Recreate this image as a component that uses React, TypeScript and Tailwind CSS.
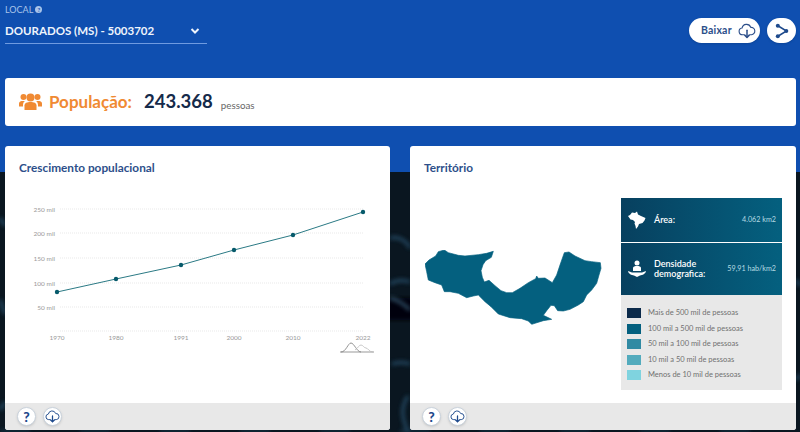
import React from "react";

const rows = [
  ["#0b2a4a", "Mais de 500 mil de pessoas"],
  ["#04607f", "100 mil a 500 mil de pessoas"],
  ["#318aa3", "50 mil a 100 mil de pessoas"],
  ["#53abbd", "10 mil a 50 mil de pessoas"],
  ["#7fd3df", "Menos de 10 mil de pessoas"],
];

const Cloud = ({ size = 18, color = "#1e4a8c" }: { size?: number; color?: string }) => (
  <svg width={size} height={size} viewBox="0 0 24 24" fill="none" stroke={color} strokeWidth="1.5" strokeLinecap="round" strokeLinejoin="round">
    <path d="M8 17H6a4.5 4.5 0 0 1-.6-8.96A6 6 0 0 1 17 7.2 4.9 4.9 0 0 1 18 17h-2" />
    <path d="M12 11v9" strokeWidth="2" />
    <path d="M9 17.5l3 3 3-3" strokeWidth="2" />
  </svg>
);

const Footer = () => (
  <div className="h-[27px] bg-[#e8e8e8] flex items-center gap-[7px] pl-[12px]">
    <div className="w-[19px] h-[19px] rounded-full bg-white border border-[#c9d2dc] flex items-center justify-center text-[14px] font-black text-[#1e4a8c] shadow-sm">?</div>
    <div className="w-[19px] h-[19px] rounded-full bg-white border border-[#c9d2dc] flex items-center justify-center shadow-sm"><Cloud size={15} /></div>
  </div>
);

const xs = [57, 116, 181, 234, 293, 363];
const ysVal = [292, 279, 265, 250, 235, 212];
const years = ["1970", "1980", "1991", "2000", "2010", "2022"];
const ticks: [string, number][] = [["250 mil", 209], ["200 mil", 233], ["150 mil", 258], ["100 mil", 283], ["50 mil", 307]];

const outline: [number, number][] = [[30,72],[42,60],[62,48],[70,35],[88,30],[100,38],[130,46],[150,48],[190,44],[215,40],[235,34],[229,52],[212,62],[204,74],[198,92],[202,112],[208,126],[222,121],[240,137],[258,152],[275,158],[292,158],[315,145],[340,128],[362,116],[365,108],[370,115],[390,114],[412,128],[425,105],[435,75],[448,38],[462,36],[480,48],[510,62],[530,65],[556,68],[558,85],[552,105],[545,130],[530,150],[515,165],[505,185],[490,195],[465,208],[445,213],[428,212],[418,197],[408,196],[395,212],[385,226],[410,238],[385,242],[350,253],[340,243],[320,236],[285,233],[250,222],[228,200],[210,185],[190,165],[175,168],[155,173],[130,160],[105,155],[88,155],[80,135],[60,128],[40,120],[35,95]];

const mapPath = "M" + outline.map(([x, y]) => `${x} ${y}`).join("L") + "Z";

export default function App() {
  return (
    <div className="relative w-[800px] h-[432px] overflow-hidden bg-[#0a141d] font-['Lato','Inter',sans-serif]">
      <svg width="800" height="260" viewBox="0 172 800 260" className="absolute left-0 top-[172px]" fill="none">
        <defs>
          <filter id="b"><feGaussianBlur stdDeviation="2" /></filter>
        </defs>
        <rect x="0" y="172" width="800" height="260" fill="#0a1620" />
        <rect x="385" y="298" width="30" height="22" fill="#02060a" filter="url(#b)" />
        <g filter="url(#b)" stroke="#2a5674" strokeWidth="3" opacity="0.85">
          <path d="M390 238c8-2 16 2 20 10" />
          <path d="M390 284c6-4 14-4 20-2" />
          <path d="M390 298c8 2 14 6 20 12" stroke="#3a6078" />
          <path d="M392 364c6-2 12-2 18 0" />
          <path d="M408 432c-6-14-8-24 0-36" />
          <path d="M0 218c2 4 4 6 5 8" />
          <path d="M0 300c2 4 3 10 5 14" />
          <path d="M0 410c2-4 4-6 5-8" />
          <path d="M796 280c2 2 3 4 4 6" />
          <path d="M796 380c2-3 3-4 4-5" />
          <path d="M0 431h800" strokeWidth="1.500" strokeDasharray="30 50" />
        </g>
      </svg>
      <div className="absolute left-0 top-0 w-full h-[172px] bg-[#0f4fb0]" />

      <div className="relative">
        <header className="h-[78px] flex justify-between pl-[5px] pr-[4px]">
          <div className="w-[202px] pt-[4px]">
            <div className="flex items-center gap-[2px] h-[11px] text-[9px] text-[#a9c4ea] leading-none">
              LOCAL
              <span className="w-[7px] h-[7px] rounded-full bg-[#a9c4ea] text-[#0f4fb0] text-[6px] font-bold flex items-center justify-center">?</span>
            </div>
            <div className="mt-[7px] h-[22px] flex items-center justify-between border-b border-[#6f9be0] pb-[3px] pr-[7px] text-[11.5px] font-bold text-[#eef4fc] whitespace-nowrap">
              DOURADOS (MS) - 5003702
              <svg width="10" height="8" viewBox="0 0 10 8" fill="none" stroke="#eef4fc" strokeWidth="2"><path d="M1.500 2l3.500 3.500L8.500 2" /></svg>
            </div>
          </div>
          <div className="flex gap-[7px] pt-[18px]">
            <div className="w-[71px] h-[25px] rounded-full bg-white flex items-center pl-[12px] gap-[6px] text-[10.5px] font-bold tracking-[0.2px] text-[#2d4f8a] shadow">
              Baixar <Cloud size={18} color="#2d4f8a" />
            </div>
            <div className="w-[29px] h-[25px] rounded-full bg-white flex items-center justify-center shadow">
              <svg width="14" height="16" viewBox="0 0 14 16" fill="none" stroke="#1e4a8c" strokeWidth="1.500">
                <path d="M2.500 2.500L11.500 8L2.500 13.500" />
                <circle cx="2.800" cy="2.800" r="2" fill="#1e4a8c" stroke="none" />
                <circle cx="11.300" cy="8" r="2" fill="#1e4a8c" stroke="none" />
                <circle cx="2.800" cy="13.200" r="2" fill="#1e4a8c" stroke="none" />
              </svg>
            </div>
          </div>
        </header>

        <section className="mx-[5px] w-[791px] h-[48px] rounded-[3px] bg-white flex items-center pl-[14px]">
          <svg width="23" height="20" viewBox="0 0 23 20" fill="#f08a33" className="mr-[7px]">
            <circle cx="11.500" cy="5.500" r="4" />
            <circle cx="4.500" cy="5" r="3" />
            <circle cx="18.500" cy="5" r="3" />
            <path d="M5.500 18v-4.500C5.500 11 8 10 11.500 10s6 1 6 3.500V18z" />
            <path d="M0 14.500v-3C0 9.500 2 9 4 9h2C4.500 10 4 11.500 4 13v1.500zM23 14.500v-3C23 9.500 21 9 19 9h-2c1.500 1 2 2.500 2 4v1.500z" />
          </svg>
          <span className="text-[17px] font-bold text-[#f08a33] mr-[12px]">População:</span>
          <span className="text-[18.500px] font-bold text-[#152a4a] mr-[8px]">243.368</span>
          <span className="text-[9.800px] text-[#666] mt-[6px]">pessoas</span>
        </section>

        <main className="flex mt-[20px] pl-[5px]">
          <section className="w-[385px] h-[284px] rounded-[3px] bg-white flex flex-col overflow-hidden">
            <h2 className="h-[46px] pl-[14px] pt-[15px] text-[11.800px] leading-[14px] font-bold text-[#2d4f8a]">Crescimento populacional</h2>
            <div className="relative flex-1">
              <svg width="385" height="211" viewBox="5 192 385 211" className="block">
                {ticks.map(([l, y]) => (
                  <g key={l}>
                    <line x1="60" x2="363" y1={y} y2={y} stroke="#e9e9e9" strokeDasharray="1 1" />
                    <text x="55" y={y + 2.5} textAnchor="end" fontSize="6.500" fill="#999">{l}</text>
                  </g>
                ))}
                <line x1="60" x2="363" y1="331" y2="331" stroke="#e9e9e9" strokeDasharray="1 1" />
                <polyline points={xs.map((x, i) => `${x},${ysVal[i]}`).join(" ")} fill="none" stroke="#2b7a85" strokeWidth="1" />
                {xs.map((x, i) => (
                  <circle key={x} cx={x} cy={ysVal[i]} r="2.200" fill="#075a6b" />
                ))}
                {xs.map((x, i) => (
                  <text key={x} x={x} y="340" textAnchor="middle" fontSize="6.500" fill="#999">{years[i]}</text>
                ))}
                <path d="M340 352h34" stroke="#999" strokeWidth="1" />
                <path d="M341 352c5 0 7-9 10-9s6 9 10 9" fill="none" stroke="#777" strokeWidth="0.800" />
                <path d="M355 350c3-2 4-5 6-5s3 3 5 3 3 4 7 4" fill="none" stroke="#bbb" strokeWidth="0.800" />
              </svg>
            </div>
            <Footer />
          </section>

          <section className="ml-[20px] w-[386px] h-[284px] rounded-[3px] bg-white flex flex-col overflow-hidden">
            <h2 className="h-[46px] pl-[14px] pt-[15px] text-[11.800px] leading-[14px] font-bold text-[#2d4f8a]">Território</h2>
            <div className="flex-1 flex">
              <div className="w-[211px] pl-[15px] pt-[58px]">
                <svg width="180" height="90" viewBox="30 30 540 270" className="block">
                  <path fill="#04607f" stroke="#04607f" strokeWidth="2" strokeLinejoin="round" d={mapPath} />
                </svg>
              </div>
              <div className="w-[161px] flex flex-col pt-[6px]">
                <div className="h-[44px] flex items-center pl-[7px] pr-[6px] text-white bg-[linear-gradient(to_right,#07405f,#04607f)]">
                  <svg width="18" height="18" viewBox="0 0 18 18" fill="white" className="shrink-0"><path d="M0 5L2 4L4 1.500L7 2L9 .5L10 3.500L13 5L17.500 7L16.500 9.500L14.500 12L11 13L10 15.500L8 18L7.500 15L6.500 12.500L7 11L5 9L2.500 8.500Z" /></svg>
                  <span className="ml-[8px] text-[9px] font-semibold">Área:</span>
                  <span className="ml-auto text-[7.200px] text-[#b5dbe3]">4.062 km2</span>
                </div>
                <div className="h-[1px]" />
                <div className="h-[52px] flex items-center pl-[7px] pr-[6px] text-white bg-[linear-gradient(to_right,#07405f,#04607f)]">
                  <svg width="18" height="18" viewBox="0 0 18 18" fill="white" className="shrink-0">
                    <circle cx="9" cy="3" r="2.500" />
                    <path d="M5 11V8c0-1.500 2-2 4-2s4 .5 4 2v3z" />
                    <path d="M0 11l4 1.500h10L18 11c-.5 3-3.500 4-6 4.500L9 17l-3-1.500C3.500 15 .5 14 0 11z" />
                  </svg>
                  <span className="ml-[8px] text-[9px] leading-[10px] font-semibold">Densidade<br />demografica:</span>
                  <span className="ml-auto text-[7.200px] text-[#b5dbe3] whitespace-nowrap">59,91 hab/km2</span>
                </div>
                <div className="h-[95px] bg-[#e8e8e8] flex flex-col gap-[5.500px] pl-[6px] pt-[13px]">
                  {rows.map(([c, t]) => (
                    <div key={t} className="flex items-center h-[10px] gap-[7px] text-[7.500px] text-[#707070] whitespace-nowrap">
                      <span className="w-[14px] h-[10px]" style={{ background: c }} />
                      {t}
                    </div>
                  ))}
                </div>
              </div>
            </div>
            <Footer />
          </section>
        </main>
      </div>
    </div>
  );
}
